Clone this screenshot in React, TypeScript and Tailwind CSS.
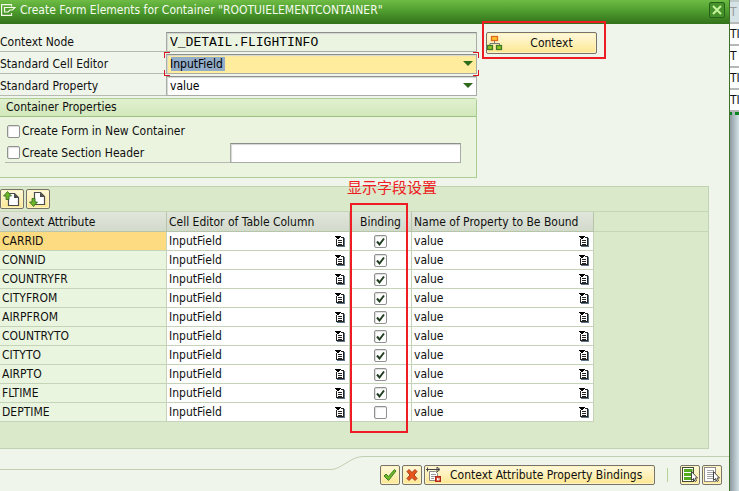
import type { ReactNode } from "react";

const attributes = [
  { name: "CARRID", bound: true },
  { name: "CONNID", bound: true },
  { name: "COUNTRYFR", bound: true },
  { name: "CITYFROM", bound: true },
  { name: "AIRPFROM", bound: true },
  { name: "COUNTRYTO", bound: true },
  { name: "CITYTO", bound: true },
  { name: "AIRPTO", bound: true },
  { name: "FLTIME", bound: true },
  { name: "DEPTIME", bound: false },
];

const field =
  "h-5 w-full rounded-none border border-[#a9aca6] border-t-[#8c8f8a] px-[3px] text-black shadow-[inset_1px_1px_1px_#d4d6d2] outline-none";

const goldButton =
  "flex items-center rounded-[2px] border border-[#77736a] bg-linear-to-b from-[#fff9dc] to-[#fde791] shadow-[inset_0_0_0_1px_#fff3c0]";

function DialogIcon() {
  return (
    <svg width="16" height="12" viewBox="0 0 16 12" fill="none" stroke="#f4fbe9" strokeWidth="1.2" aria-hidden="true">
      <path d="M11.500 2.500V0.600H1.600v10.800h9.900V9M4.500 3.500h10.500l-2.500 2.500h-2.500l-2 2h-3.500z" />
    </svg>
  );
}

function TreeIcon() {
  return (
    <svg width="16" height="16" viewBox="0 0 16 16" fill="none" aria-hidden="true">
      <path d="M7.500 6v3M3 11V8.500h9.500V11" stroke="#777" />
      <rect x="4.500" y="1.500" width="6" height="4" fill="#ffc62e" stroke="#e0691c" strokeWidth="1.300" />
      <rect x="0.500" y="10.500" width="5" height="4" fill="#8fc31f" stroke="#3f7a28" strokeWidth="1.300" />
      <rect x="9.500" y="10.500" width="5" height="4" fill="#8fc31f" stroke="#3f7a28" strokeWidth="1.300" />
    </svg>
  );
}

function PageIcon({ up }: { up: boolean }) {
  return (
    <svg width="18" height="16" viewBox="0 0 18 16" aria-hidden="true">
      <g transform={up ? "translate(-1 0)" : "translate(-1 -1)"}>
        <path d="M6.500 2.500h6l4 4v8h-10z" fill="#fff" stroke="#4b4b4b" strokeWidth="1.200" />
        <path d="M12 2.500v4.500h4.500z" fill="#4b4b4b" />
      </g>
      {up ? (
        <path d="M4.500 0.500l4 4.500h-2.500v3.500h-3v-3.500h-2.500z" fill="#6fb52c" stroke="#2d6b1c" strokeWidth="0.800" />
      ) : (
        <path d="M4.500 15.500l4-4.500h-2.500v-3.500h-3v3.500h-2.500z" fill="#6fb52c" stroke="#2d6b1c" strokeWidth="0.800" />
      )}
    </svg>
  );
}

function ListIcon() {
  return (
    <svg width="10" height="11" viewBox="0 0 10 11" shapeRendering="crispEdges" aria-hidden="true">
      <path d="M8 2h2v9H2v-1h6z" fill="#5c7484" />
      <path d="M1 3h1v6h6V2H6V1h3v9H1z" fill="#222" />
      <path d="M2 2h6v7H2z" fill="#fff" />
      <path d="M0 0h6v1H5v1H4v1H2V2H1V1H0z" fill="#000" />
      <path d="M3 4h4v1H3zM3 6h4v1H3zM3 8h4v1H3z" fill="#222" />
    </svg>
  );
}

function BindingsIcon() {
  return (
    <svg width="16" height="16" viewBox="0 0 16 16" fill="none" aria-hidden="true">
      <path d="M0 2.500h13M1.500 0.500v4M11 0l3 2.500L11 5z" stroke="#444" />
      <path d="M3.500 4.500h6l2 2v7h-8z" fill="#fff" stroke="#8a8a8a" />
      <path d="M5 7.500h5M5 9.500h4M5 11.500h3" stroke="#999" />
      <rect x="9.500" y="9.500" width="5" height="5" fill="#cf4a30" stroke="#b4281c" />
      <path d="M11.500 11v2h1.500v-2" stroke="#fff" />
    </svg>
  );
}

function SelectionIcon({ filled }: { filled: boolean }) {
  const stroke = filled ? "#3e4a35" : "#8b8b8b";
  return (
    <svg width="18" height="16" viewBox="0 0 18 16" aria-hidden="true">
      <rect x="1.500" y="0.500" width="11" height="14" fill="#fff" stroke={stroke} />
      {filled ? (
        <path d="M3 2h8.500v3H3zM3 6h8.500v3H3zM3 10h8.500v3H3z" fill="#55ab1e" />
      ) : (
        <path d="M4 3.500h7M4 5.500h7M4 7.500h7M4 9.500h7M4 11.500h7" stroke="#a5a5a5" />
      )}
      <path d="M10.500 4.500v9l2-2 1.500 3 1.500-1-1.500-2.500h2.500z" fill="#fff" stroke="#444" />
    </svg>
  );
}

function CheckBox({ id, label, checked = false }: { id?: string; label?: string; checked?: boolean }) {
  return (
    <span className="grid size-[13px] shrink-0">
      <input
        id={id}
        type="checkbox"
        aria-label={label}
        defaultChecked={checked}
        className="peer col-start-1 row-start-1 size-[13px] appearance-none rounded-[2px] border border-[#8f928e] bg-white shadow-[inset_1px_1px_1px_#dedede]"
      />
      <svg
        className="pointer-events-none invisible col-start-1 row-start-1 size-[13px] peer-checked:visible"
        viewBox="0 0 13 13"
        fill="none"
        stroke="#203c20"
        strokeWidth="2"
        aria-hidden="true"
      >
        <path d="M3 6.500l2.500 3 4.500-6" />
      </svg>
    </span>
  );
}

function Combo({ id, value, active = false }: { id: string; value: string; active?: boolean }) {
  return (
    <div className="relative w-[311px]">
      <select
        id={id}
        defaultValue={value}
        className={
          field +
          " block appearance-none " +
          (active
            ? "bg-[#ffec9c] bg-[linear-gradient(#93acc8,#93acc8)] bg-[length:54px_14px] bg-[position:4px_2px] bg-no-repeat"
            : "bg-white")
        }
      >
        <option>{value}</option>
      </select>
      <svg className="pointer-events-none absolute top-[7px] right-1" width="10" height="5" viewBox="0 0 10 5" aria-hidden="true">
        <path d="M0 0h10L5 5z" fill="#2f6b1c" />
      </svg>
      {active && (
        <>
          <span className="absolute -top-0.5 -left-0.5 h-1.5 w-1.5 border-t border-l border-[#d8141c]" />
          <span className="absolute -top-0.5 -right-0.5 h-1.5 w-1.5 border-t border-r border-[#d8141c]" />
          <span className="absolute -bottom-0.5 -left-0.5 h-1.5 w-1.5 border-b border-l border-[#d8141c]" />
          <span className="absolute -right-0.5 -bottom-0.5 h-1.5 w-1.5 border-r border-b border-[#d8141c]" />
        </>
      )}
    </div>
  );
}

function FormRow({ id, label, children }: { id: string; label: string; children: ReactNode }) {
  return (
    <div className="flex">
      <label htmlFor={id} className="h-5 w-[166px] shrink-0 border-b border-[#b5b9b1] leading-5">
        {label}
      </label>
      {children}
    </div>
  );
}

function ListCell({ text }: { text: string }) {
  return (
    <td className="border-r border-b border-[#c5d3b9] bg-white p-0 pr-1 pl-0.5">
      <div className="flex items-center justify-between">
        <span>{text}</span>
        <button type="button" aria-label="Choose value">
          <ListIcon />
        </button>
      </div>
    </td>
  );
}

function BackgroundRow({ text, muted = false }: { text: string; muted?: boolean }) {
  return (
    <div
      className={
        "h-[22px] overflow-hidden border-b-2 border-[#b7b9b9] leading-5 " +
        (muted ? "bg-[#d5e3e7] text-[#999]" : "bg-white")
      }
    >
      {text}
    </div>
  );
}

export default function App() {
  return (
    <div className="flex min-h-screen bg-[#d3e2e6] font-['DejaVu_Sans_Condensed','Noto_Sans',sans-serif] text-[12px] leading-4 text-[#101010]">
      <main className="flex min-w-0 flex-1 flex-col border-r border-[#3f7027] bg-[#eff5ea]">
        <header className="flex h-6 items-center gap-1 bg-linear-to-b from-[#6ebc45] via-[#4c9a2c] to-[#32711a] pr-1 pb-1 text-[#f5fbef]">
          <DialogIcon />
          <h1 className="flex-1">Create Form Elements for Container "ROOTUIELEMENTCONTAINER"</h1>
          <button
            type="button"
            aria-label="Close"
            className="flex size-4 items-center justify-center rounded-[2px] border border-[#28601a] bg-[#47932b]"
          >
            <svg width="10" height="10" viewBox="0 0 10 10" stroke="#c6f59d" strokeWidth="2" aria-hidden="true">
              <path d="M1 1l8 8M9 1l-8 8" />
            </svg>
          </button>
        </header>

        <div className="flex gap-[9px] pt-2">
          <section className="flex w-[477px] shrink-0 flex-col gap-0.5">
            <FormRow id="node" label="Context Node">
              <input
                id="node"
                readOnly
                defaultValue="V_DETAIL.FLIGHTINFO"
                className={field + " max-w-[311px] bg-[#eaf4e0] font-['Liberation_Mono',monospace] text-[13px]"}
              />
            </FormRow>
            <FormRow id="editor" label="Standard Cell Editor">
              <Combo id="editor" value="InputField" active />
            </FormRow>
            <FormRow id="property" label="Standard Property">
              <Combo id="property" value="value" />
            </FormRow>

            <fieldset className="h-[80px] rounded-tr-[3px] border border-l-0 border-[#adce93] bg-[#eaf4df]">
              <legend className="float-left h-[18px] w-full border-b border-[#9dc183] bg-linear-to-b from-[#e0f0cf] to-[#d2e8bb] pl-1.5 leading-4">
                Container Properties
              </legend>
              <div className="clear-both flex flex-col gap-0.5 pt-1 pl-[5px]">
                <div className="flex h-5 items-center gap-0.5 pl-0.5">
                  <CheckBox id="new-container" />
                  <label htmlFor="new-container">Create Form in New Container</label>
                </div>
                <div className="flex h-5">
                  <div className="flex w-[225px] items-center gap-0.5 border-b border-[#b5b9b1] pl-0.5">
                    <CheckBox id="section-header" />
                    <label htmlFor="section-header">Create Section Header</label>
                  </div>
                  <input aria-label="Section header text" className={field + " max-w-[231px] bg-white"} />
                </div>
              </div>
            </fieldset>
          </section>

          <div className="relative h-[22px] w-[111px]">
            <button type="button" className={goldButton + " h-[22px] w-full"}>
              <TreeIcon />
              <span className="flex-1 pr-2 pl-3 text-center">Context</span>
            </button>
            <span className="pointer-events-none absolute -top-[11px] -right-[9px] -bottom-[5px] -left-1 border-2 border-[#ee1c23]" />
          </div>
        </div>

        <section className="relative mt-2 mr-5 h-[263px] border border-l-0 border-[#c2d3b4] bg-[#dbe9cb]">
          <div className="flex h-[25px] items-center gap-0.5 border-b border-[#c5d5b7]">
            <button type="button" aria-label="Move to previous page" className={goldButton + " h-5 w-6 justify-center"}>
              <PageIcon up />
            </button>
            <button type="button" aria-label="Move to next page" className={goldButton + " h-5 w-6 justify-center"}>
              <PageIcon up={false} />
            </button>
          </div>

          <table className="w-full table-fixed border-separate border-spacing-0 text-left">
            <colgroup>
              <col className="w-[167px]" />
              <col className="w-[183px]" />
              <col className="w-[62px]" />
              <col className="w-[182px]" />
              <col />
            </colgroup>
            <thead>
              <tr className="h-5">
                {["Context Attribute", "Cell Editor of Table Column", "Binding", "Name of Property to Be Bound"].map((title) => (
                  <th
                    key={title}
                    scope="col"
                    className={
                      "border-r border-b border-[#b6c5aa] bg-linear-to-b from-[#e1e6db] to-[#d2dacc] p-0 font-normal whitespace-nowrap " +
                      (title === "Binding" ? "text-center" : "pl-0.5")
                    }
                  >
                    {title}
                  </th>
                ))}
                <td className="border-b border-[#c5d5b7] p-0" />
              </tr>
            </thead>
            <tbody>
              {attributes.map((row, index) => (
                <tr key={row.name} className="h-[19px] leading-4">
                  <th
                    scope="row"
                    className={
                      "border-r border-b border-[#c5d3b9] p-0 pl-0.5 font-normal " +
                      (index === 0 ? "bg-[#fddb80]" : "bg-[#eaf5df]")
                    }
                  >
                    {row.name}
                  </th>
                  <ListCell text="InputField" />
                  <td className="border-r border-b border-[#c5d3b9] bg-white p-0">
                    <div className="flex items-center justify-center">
                      <CheckBox label={"Bind " + row.name} checked={row.bound} />
                    </div>
                  </td>
                  <ListCell text="value" />
                  <td className="p-0" />
                </tr>
              ))}
            </tbody>
          </table>

          <span className="pointer-events-none absolute top-4 left-[350px] h-[230px] w-[58px] border-2 border-[#ee1c23]" />
          <span className="absolute -top-2 left-[347px] font-['Noto_Sans_CJK_SC',sans-serif] text-[15px] text-[#ee1c23]">
            显示字段设置
          </span>
        </section>

        <footer className="mt-[7px] flex flex-1 flex-col">
          <div className="flex h-[15px]">
            <div className="h-[14px] w-[331px] border-b border-[#c0cfb2]" />
            <svg width="32" height="15" viewBox="0 0 32 15" fill="none" stroke="#c0cfb2" aria-hidden="true">
              <path d="M0 13.500C10 13.500 20 0.500 32 0.500" />
            </svg>
            <div className="flex-1 border-t border-[#c0cfb2]" />
          </div>
          <div className="-mt-1.5 flex items-center justify-end gap-0.5 pr-[7px]">
            <button type="button" aria-label="Continue" className={goldButton + " size-5 justify-center"}>
              <svg width="14" height="14" viewBox="0 0 14 14" aria-hidden="true">
                <path d="M1 8l2-2 2.500 2.500L11.500 1.500l1.500 1.500-7.500 9.500z" fill="#6cba2c" stroke="#3c7d20" />
              </svg>
            </button>
            <button type="button" aria-label="Cancel" className={goldButton + " size-5 justify-center"}>
              <svg width="14" height="14" viewBox="0 0 14 14" aria-hidden="true">
                <path d="M2 3.500l2-2 3 3 3-3 2 2L9 7l3 3.500-2 2-3-3-3 3-2-2L5 7z" fill="#e8561c" stroke="#a8361c" />
              </svg>
            </button>
            <button type="button" className={goldButton + " h-5 w-[231px] gap-2 pl-px whitespace-nowrap"}>
              <BindingsIcon />
              Context Attribute Property Bindings
            </button>
            <span className="mr-2.5 ml-2.5 h-3.5 w-px bg-[#b5d297]" />
            <button type="button" aria-label="Select all" className={goldButton + " size-5 justify-center"}>
              <SelectionIcon filled />
            </button>
            <button type="button" aria-label="Deselect all" className={goldButton + " size-5 justify-center"}>
              <SelectionIcon filled={false} />
            </button>
          </div>
        </footer>
      </main>

      <aside className="flex w-[9px] shrink-0 flex-col overflow-hidden bg-linear-to-r from-[#8e9ca1] to-[#d3e2e6]">
        <div className="h-0.5 bg-[#bfcacc]" />
        <BackgroundRow text="T" muted />
        <BackgroundRow text="TI" />
        <BackgroundRow text="T" />
        <BackgroundRow text="TI" />
        <BackgroundRow text="TI" />
        <div className="flex h-[3px] justify-between">
          <span className="w-0.5 bg-[#0d8420]" />
          <span className="w-1 bg-[#0d8420]" />
        </div>
      </aside>
    </div>
  );
}
